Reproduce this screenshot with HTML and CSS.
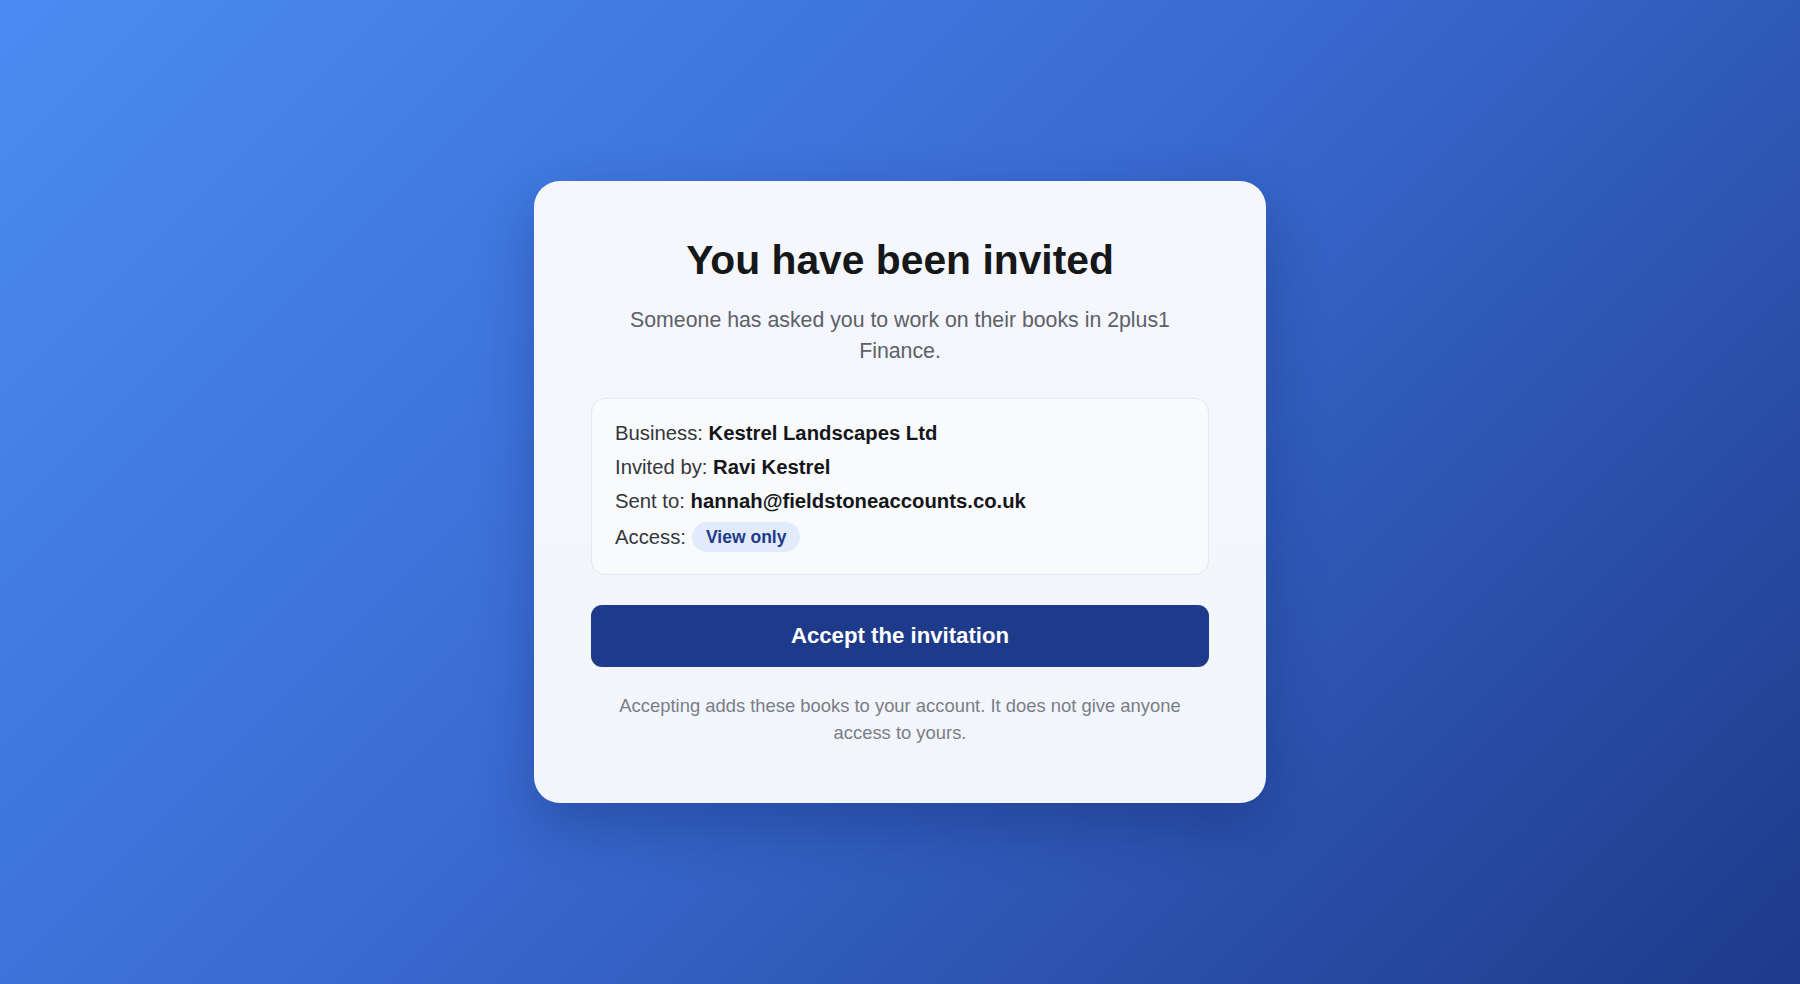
FILE: index.html
```html
<!DOCTYPE html>
<html lang="en">
<head>
<meta charset="utf-8">
<title>You have been invited</title>
<link rel="stylesheet" href="styles.css">
</head>
<body>
<main class="page">
  <section class="card">
    <h1 class="title">You have been invited</h1>
    <p class="subtitle">Someone has asked you to work on their books in 2plus1 Finance.</p>
    <div class="details">
      <div class="row">Business: <strong>Kestrel Landscapes Ltd</strong></div>
      <div class="row">Invited by: <strong>Ravi Kestrel</strong></div>
      <div class="row">Sent to: <strong>hannah@fieldstoneaccounts.co.uk</strong></div>
      <div class="row row-access">Access: <span class="badge">View only</span></div>
    </div>
    <button class="accept" type="button">Accept the invitation</button>
    <p class="note">Accepting adds these books to your account. It does not give anyone access to yours.</p>
  </section>
</main>
</body>
</html>
```

FILE: styles.css
```css
* { box-sizing: border-box; }

html, body {
  margin: 0;
  height: 100%;
}

body {
  font-family: "Liberation Sans", Arial, Helvetica, sans-serif;
  background: linear-gradient(135deg, #4a8cf3 0%, #3a6cd3 45%, #1e3a8a 100%);
}

.page {
  min-height: 100vh;
  display: flex;
  align-items: center;
  justify-content: center;
}

.card {
  width: 732px;
  padding: 55px 57px 57px;
  background: linear-gradient(180deg, #f5f7fd 0%, #f2f5fc 100%);
  border-radius: 26px;
  box-shadow: 0 22px 55px rgba(10, 30, 90, 0.32);
  text-align: center;
}

.title {
  margin: 0;
  font-size: 40.8px;
  line-height: 48px;
  font-weight: 700;
  color: #161719;
}

.subtitle {
  margin: 21px 0 0;
  font-size: 21.3px;
  line-height: 31px;
  color: #5d6168;
}

.details {
  margin-top: 31px;
  padding: 17px 23px 18px;
  background: #f9fafc;
  border: 1px solid #e6e9f0;
  border-radius: 14px;
  text-align: left;
  font-size: 20.3px;
  color: #33363b;
}

.row {
  line-height: 34px;
}

.row strong {
  color: #15161a;
  font-weight: 700;
}

.row-access {
  display: flex;
  align-items: center;
  gap: 6px;
  height: 38px;
}

.badge {
  display: inline-block;
  padding: 0 14px;
  height: 30px;
  line-height: 30px;
  border-radius: 15px;
  background: #e2ebfb;
  color: #1e3a8a;
  font-size: 17.5px;
  font-weight: 700;
}

.accept {
  display: block;
  width: 100%;
  height: 62px;
  margin-top: 30px;
  border: none;
  border-radius: 11px;
  background: #1e3a8a;
  color: #ffffff;
  font-family: inherit;
  font-size: 22.2px;
  font-weight: 700;
  cursor: pointer;
}

.note {
  margin: 25px auto 0;
  max-width: 590px;
  font-size: 18.4px;
  line-height: 27px;
  color: #7a7e86;
}
```
